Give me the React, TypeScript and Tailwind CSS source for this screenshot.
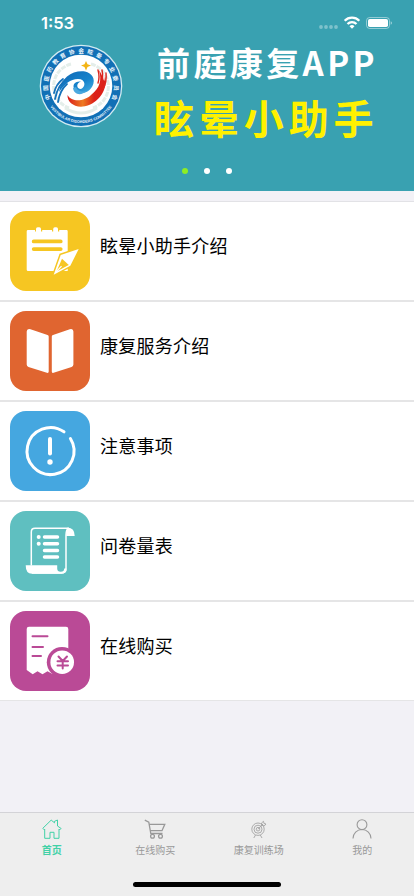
import type { ReactNode } from "react";

const menu: { label: string; color: string; icon: ReactNode }[] = [
  { label: "眩晕小助手介绍", color: "bg-[#f6c622]", icon: <NoteIcon /> },
  { label: "康复服务介绍", color: "bg-[#e06530]", icon: <BookIcon /> },
  { label: "注意事项", color: "bg-[#45a7e0]", icon: <AlertIcon /> },
  { label: "问卷量表", color: "bg-[#5fbfc0]", icon: <ScrollIcon /> },
  { label: "在线购买", color: "bg-[#ba4a96]", icon: <ReceiptIcon /> },
];

function NoteIcon() {
  return (
    <svg viewBox="0 0 80 80" className="size-20">
      <path
        fill="#fff"
        d="M18 19h7v1.5h1V18q0-1.700 1.700-1.700h1.600q1.700 0 1.700 1.700v2.500h1.200V19h9.800v1.500h1.200V18q0-1.700 1.700-1.700h1.400q1.700 0 1.700 1.700v2.500h1.200V19h7.300q1.200 0 1.200 1.200V60H18q-1.300 0-1.300-1.300V20.300Q16.700 19 18 19Z"
      />
      <path
        d="M23.700 30.400h27M23.700 38.100h27"
        stroke="#f6c622"
        strokeWidth="3.800"
        strokeLinecap="round"
      />
      <path
        d="M68.700 38 50.700 44 43.700 63.700 60.300 54.700Z"
        fill="#fff"
        stroke="#f6c622"
        strokeWidth="3"
      />
      <path d="M68.700 38 50.700 44 43.700 63.700 60.300 54.700Z" fill="#fff" />
      <path d="M52 47.800 58.800 54 46.500 60.600Z" fill="#f6c622" />
      <path d="M46 61 51.500 55.200" stroke="#fff" strokeWidth="1.200" />
    </svg>
  );
}

function BookIcon() {
  return (
    <svg viewBox="0 0 80 80" className="size-20" fill="#fff">
      <path d="M20.500 18.200 37.500 24q1.200.4 1.200 1.600v35q0 1.800-1.800 1.200L18.500 56Q16.700 55.300 16.700 53.500V20.500q0-3.200 3.800-2.300Z" />
      <path d="M59.800 18.200 43 24q-1.200.4-1.200 1.600v35q0 1.800 1.800 1.200L61.600 56q1.800-.7 1.800-2.500V20.500q0-3.200-3.600-2.300Z" />
    </svg>
  );
}

function AlertIcon() {
  return (
    <svg
      viewBox="0 0 80 80"
      className="size-20"
      fill="none"
      stroke="#fff"
      strokeLinecap="round"
    >
      <path d="M60.400 27.500A23.500 23.500 0 1 1 54 20.800" strokeWidth="3" />
      <path d="M40 28v14.500" strokeWidth="4" />
      <circle cx="40" cy="51" r="2.700" fill="#fff" stroke="none" />
    </svg>
  );
}

function ScrollIcon() {
  return (
    <svg viewBox="0 0 80 80" className="size-20">
      <path
        d="M21.300 54.500V21q0-3.700 3.700-3.700h34M56 57V24q0-5 2.500-6.500M56 57q0 5-4.700 5H22"
        fill="none"
        stroke="#fff"
        strokeWidth="1.500"
      />
      <path
        fill="#fff"
        d="M57.500 16.600q7.200.4 7.200 8.400h-8.500v-2q0-4 1.300-6.400ZM15.700 54.200h31.500v3.300q0 3.200 3.500 3.200t3.500-3.200H56.700q0 5.200-5.200 5.200H22q-6.300 0-6.300-8.500Z"
      />
      <path
        d="M34.500 25.900h13M34.500 32.700h13M34.500 39.500h13M34.500 46h13"
        stroke="#fff"
        strokeWidth="3.500"
        strokeLinecap="round"
      />
      <circle cx="28.700" cy="25.900" r="2" fill="#fff" />
      <circle cx="28.700" cy="32.700" r="2" fill="#fff" />
    </svg>
  );
}

function ReceiptIcon() {
  return (
    <svg viewBox="0 0 80 80" className="size-20">
      <path
        fill="#fff"
        d="M19 15.700h37q2.300 0 2.300 2.300v42H46L42.500 63 37.500 60.300 32.500 63.300 27.500 60.300 22.700 63.300 16.700 59V18q0-2.300 2.300-2.300Z"
      />
      <circle cx="52" cy="51.200" r="15.200" fill="#ba4a96" />
      <circle cx="52.200" cy="51.200" r="11.800" fill="#fff" />
      <path
        d="M22.500 25.300h15M22.500 36h10.500M22.500 45h8.500M48.500 45.500 52.700 50 57 45.500M47.500 50.300h10.500M47.500 54.500h10.500M52.700 50v7.500"
        fill="none"
        stroke="#ba4a96"
        strokeWidth="2"
        strokeLinecap="round"
      />
    </svg>
  );
}

function Logo() {
  return (
    <svg viewBox="0 0 84 84" className="-mt-px size-[84px] shrink-0">
      <defs>
        <path id="ring-top" d="M12.100 56.500A33.200 33.200 0 1 1 71.900 56.500" />
        <path id="ring-bottom" d="M7.200 55A37.200 37.200 0 0 0 76.800 55" />
        <linearGradient id="wave" x1="0" y1="0" x2="1" y2="1">
          <stop offset="0" stopColor="#1268b4" />
          <stop offset="0.600" stopColor="#1683cc" />
          <stop offset="1" stopColor="#4bb1e5" />
        </linearGradient>
        <linearGradient id="flame" x1="0" y1="0" x2="1" y2="0">
          <stop offset="0" stopColor="#d91c1c" />
          <stop offset="0.400" stopColor="#ee7a22" />
          <stop offset="0.700" stopColor="#dc2018" />
        </linearGradient>
      </defs>
      <circle cx="42" cy="42" r="41.300" fill="#d3ebf2" />
      <circle cx="42" cy="42" r="40" fill="#1170b6" />
      <circle cx="42" cy="42" r="31.300" fill="#fff" />
      <g fill="none" stroke="#e4eeea" strokeWidth="3">
        <path d="M32 20A23 23 0 0 0 30 64M52 20A23 23 0 0 1 54 64" strokeDasharray="5 1" />
        <path d="M26 64q16 10 32 0" />
      </g>
      <path
        fill="url(#wave)"
        d="M20 48C22 33 34 26 46 27.500C53 29 57 35 53.500 42C50 49 42 51 37 47C32 42 35 37 42 37.500C37 39 37 45 42 45C47 43 47 35 39 35C31 35 26 40 20 48Z"
      />
      <path
        d="M34 44C35 51 42 52 48 47C44 48 39 48 37 43"
        fill="#4ba8df"
      />
      <path
        d="M29 34Q19 40 16 55M24 35Q17 40 15 49M28 40Q21 46 19 58"
        fill="none"
        stroke="#1672ba"
        strokeWidth="1.800"
        strokeLinecap="round"
      />
      <path
        fill="url(#flame)"
        d="M28.500 51C33 59 46 57 52 51C61 44 63 36 60 26C66 36 65 41 66 32C69 46 60 57 50 61C38 66 28 59 28.500 51Z"
      />
      <path
        d="M61 43Q65 35 63 26M64 45Q68 38 67 29M59 39Q61 33 59 26"
        fill="none"
        stroke="#dc251d"
        strokeWidth="1.400"
        strokeLinecap="round"
      />
      <path
        fill="#f3b414"
        d="M47 17 48.500 20.300 52 21.500 48.500 22.900 47 26.500 45.500 22.900 42 21.500 45.500 20.300Z"
      />
      <g fill="#eaf5fb" fontWeight="700" textAnchor="middle">
        <text fontSize="5.700" fontFamily="'Noto Sans CJK SC', sans-serif">
          <textPath href="#ring-top" startOffset="50%" textLength="131">
            中国医药教育协会眩晕专业委员会
          </textPath>
        </text>
        <text fontSize="3.800" fontFamily="'Liberation Sans', sans-serif">
          <textPath href="#ring-bottom" startOffset="50%" textLength="72">
            VESTIBULAR DISORDERS COMMITTEE
          </textPath>
        </text>
      </g>
    </svg>
  );
}

function StatusBar() {
  return (
    <div className="flex h-[45px] items-start justify-between pt-[13px] pl-[41px] pr-[22px]">
      <span className="font-['Inter'] text-[16.500px] leading-5 font-semibold">
        1:53
      </span>
      <svg viewBox="0 0 74 20" className="h-5 w-[74px]" fill="#fff">
        <g opacity="0.350">
          <circle cx="3" cy="14" r="1.900" />
          <circle cx="8" cy="14" r="1.900" />
          <circle cx="13" cy="14" r="1.900" />
          <circle cx="18" cy="14" r="1.900" />
        </g>
        <g fill="none" stroke="#fff" strokeWidth="2.300">
          <path d="M26.700 7.800a10.200 10.200 0 0 1 14.600 0" />
          <path d="M29.500 11a6.300 6.300 0 0 1 9 0" />
        </g>
        <path d="M31.500 13.200a3.700 3.700 0 0 1 5 0L34 15.800Z" />
        <rect
          x="48.500"
          y="4.500"
          width="23"
          height="11"
          rx="3.200"
          fill="none"
          stroke="#fff"
          strokeOpacity="0.450"
        />
        <rect x="50" y="6" width="20" height="8" rx="1.800" />
        <path d="M72.700 8.200q1.300.5 1.300 1.800t-1.300 1.800Z" opacity="0.500" />
      </svg>
    </div>
  );
}

function Banner() {
  return (
    <header className="flex h-[191px] flex-col bg-[#39a1b1] text-white">
      <StatusBar />
      <div className="flex h-[121px] pl-[39px]">
        <Logo />
        <div className="-mt-0.5 flex flex-col pl-[34px] font-bold whitespace-nowrap">
          <span className="h-[45px] text-[33px] leading-[38px] tracking-[3.400px]">
            前庭康复APP
          </span>
          <span className="-ml-[3px] text-[40px] leading-[58px] tracking-[4.900px] text-[#fff100]">
            眩晕小助手
          </span>
        </div>
      </div>
      <div className="flex justify-center gap-4 pt-0.5">
        <i className="size-1.5 rounded-full bg-[#8eed25]" />
        <i className="size-1.5 rounded-full bg-white" />
        <i className="size-1.5 rounded-full bg-white" />
      </div>
    </header>
  );
}

function HomeIcon() {
  return (
    <svg viewBox="0 0 20 20" className="size-5" fill="none" stroke="#42d1a7">
      <path d="M.8 9.300 9.200 1.100 12.500 3.800V2.300l3-1.300v6l3.600 2.500-1.300 1.300-.8-.8v9.300h-5v-6H8v6H2.700v-9.300l-.6.700Z" />
    </svg>
  );
}

function CartIcon() {
  return (
    <svg viewBox="0 0 22 20" className="h-5 w-[22px]" fill="none" stroke="#999" strokeWidth="1.300">
      <path d="M.8 1.200 4.800 3.200 6.800 14.500H18.500M5.500 5.300h15.300L18 11.700H6.500" />
      <circle cx="8.500" cy="17.300" r="1.900" />
      <circle cx="16.500" cy="17.300" r="1.900" />
    </svg>
  );
}

function TargetIcon() {
  return (
    <svg viewBox="0 0 20 20" className="size-5" fill="none" stroke="#a3a3a3" strokeWidth="0.900">
      <circle cx="9" cy="10.200" r="6.200" />
      <circle cx="9" cy="10.200" r="4" />
      <circle cx="9" cy="10.200" r="1.800" />
      <path d="M9 10.200 14 5M12.800 6.200 12.500 4 14.500 2.300 15 4.500 17 5 15.200 7ZM6.500 16l-1.700 3M11.300 16l1.700 3" />
    </svg>
  );
}

function UserIcon() {
  return (
    <svg viewBox="0 0 20 20" className="size-5" fill="none" stroke="#999" strokeWidth="1.100">
      <circle cx="10" cy="5.700" r="4.900" />
      <path d="M1 19.500c0-5 4-9 9-9s9 4 9 9" />
    </svg>
  );
}

const tabs = [
  { label: "首页", icon: <HomeIcon />, active: true },
  { label: "在线购买", icon: <CartIcon />, active: false },
  { label: "康复训练场", icon: <TargetIcon />, active: false },
  { label: "我的", icon: <UserIcon />, active: false },
];

export default function App() {
  return (
    <div className="flex h-[896px] w-[414px] flex-col overflow-hidden bg-[#f2f1f6] font-['Noto_Sans_CJK_SC',sans-serif]">
      <Banner />

      <main className="flex-1 pt-2.5">
        <ul className="border-t border-[#e2e2e6]">
          {menu.map((item) => (
            <li
              key={item.label}
              className="flex h-[100px] border-b-2 border-[#e5e5e6] bg-white pt-[9px] pl-2.5 last:h-[99px] last:border-b"
            >
              <div className={`size-20 rounded-[16px] ${item.color}`}>
                {item.icon}
              </div>
              <span className="pt-[21px] pl-2.5 text-[18px] leading-[26px] tracking-[0.250px] text-black">
                {item.label}
              </span>
            </li>
          ))}
        </ul>
      </main>

      <nav className="flex h-[84px] flex-col border-t border-[#d3d3d7] bg-[#eee]">
        <div className="grid h-[69px] grid-cols-4">
          {tabs.map((tab) => (
            <div key={tab.label} className="flex flex-col items-center pt-1.5">
              {tab.icon}
              <span
                className={
                  tab.active
                    ? "pt-1 text-[10px] leading-[14px] font-bold text-[#42d1a7]"
                    : "pt-1 text-[10px] leading-[14px] text-[#999]"
                }
              >
                {tab.label}
              </span>
            </div>
          ))}
        </div>
        <div className="mx-auto h-[5px] w-[148px] rounded-full bg-black" />
      </nav>
    </div>
  );
}
